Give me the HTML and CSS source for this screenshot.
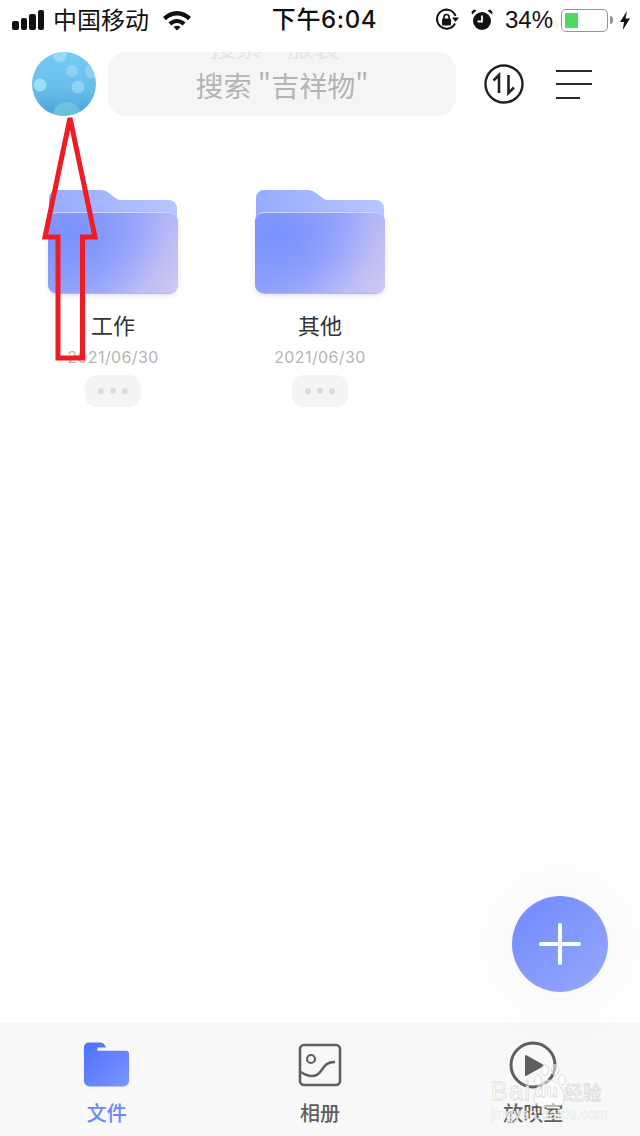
FILE: index.html
```html
<!DOCTYPE html>
<html lang="zh-CN">
  <head>
    <meta charset="UTF-8" />
    <title>文件</title>
    <link rel="stylesheet" href="styles.css">
  </head>
  <body>
    <div class="page">
      <div class="status_bar">
        <div class="status_left">
          <div class="signal"><i></i><i></i><i></i><i></i></div>
          <span class="carrier">中国移动</span>
          <svg class="wifi" width="28" height="22" viewBox="0 0 28 22">
            <path d="M0 8C8 0 20 0 28 8L25 11.200C18.500 5 9.500 5 3 11.200Z" />
            <path d="M5.500 13.500C10.500 8.800 17.500 8.800 22.500 13.500L19.600 16.500C16 13.200 12 13.200 8.400 16.500Z" />
            <path d="M10.500 18C12.500 16.200 15.500 16.200 17.500 18L14 21.500Z" />
          </svg>
        </div>
        <span class="time">下午6:04</span>
        <div class="status_right">
          <svg class="lock_rotate" width="24" height="24" viewBox="0 0 24 24">
            <path d="M20 15.500A9.500 9.500 0 1 1 20.500 8" fill="none" stroke="#111" stroke-width="2" />
            <path d="M17 9.500h7l-3.500 4.500Z" fill="#111" />
            <rect x="7" y="10.500" width="9" height="7" rx="1" fill="#111" />
            <path d="M9 11V9a2.500 2.500 0 0 1 5 0v2" fill="none" stroke="#111" stroke-width="1.600" />
          </svg>
          <svg class="alarm" width="22" height="24" viewBox="0 0 22 24">
            <circle cx="11" cy="13" r="9" fill="#111" />
            <path d="M11 7.500V13.500H6.500" fill="none" stroke="#fff" stroke-width="1.800" />
            <path d="M1 6.500L5.500 2.500L3 1.500L0.500 3.800ZM21 6.500L16.500 2.500L19 1.500L21.500 3.800Z" fill="#111" />
          </svg>
          <span class="battery_text">34%</span>
          <div class="battery">
            <div class="battery_fill"></div>
          </div>
          <div class="battery_tip"></div>
          <svg class="bolt" width="10" height="19" viewBox="0 0 10 19">
            <path d="M7 0L0 11H4L2.800 19L10 7.500H5.500Z" fill="#111" />
          </svg>
        </div>
      </div>

      <div class="top_bar">
        <svg class="avatar" width="64" height="64" viewBox="0 0 64 64">
          <defs>
            <linearGradient id="avatar_bg" x1="0" y1="0" x2="0" y2="1">
              <stop offset="0" stop-color="#76cbf4" />
              <stop offset="0.6" stop-color="#68bde9" />
              <stop offset="1" stop-color="#4aa3d6" />
            </linearGradient>
            <clipPath id="avatar_clip"><circle cx="32" cy="32" r="32" /></clipPath>
          </defs>
          <g clip-path="url(#avatar_clip)">
            <rect width="64" height="64" fill="url(#avatar_bg)" />
            <circle cx="28" cy="3" r="7" fill="#a3dff6" opacity="0.7" />
            <circle cx="40" cy="19" r="6" fill="#a3dff6" opacity="0.55" />
            <circle cx="60" cy="19" r="7" fill="#a3dff6" opacity="0.55" />
            <circle cx="8" cy="33" r="6.500" fill="#a3e4f8" opacity="0.85" />
            <circle cx="46" cy="35" r="6.500" fill="#a3dff6" opacity="0.6" />
            <circle cx="35" cy="64" r="14" fill="#7fcbe2" opacity="0.65" />
          </g>
        </svg>

        <div class="search_box">
          <span class="search_ghost">搜索 服装</span>
          <span class="search_text">搜索 "吉祥物"</span>
        </div>

        <svg class="sort_icon" width="40" height="40" viewBox="0 0 40 40">
          <circle cx="20" cy="20" r="18.500" fill="none" stroke="#222" stroke-width="2.400" />
          <path d="M9.500 16.500L15 11V29" fill="none" stroke="#222" stroke-width="2.600" />
          <path d="M30 23.500L24.500 29V11" fill="none" stroke="#222" stroke-width="2.600" />
        </svg>

        <div class="menu_icon"><i></i><i></i><i class="short"></i></div>
      </div>

      <div class="file_list">
        <div class="folder_item">
          <div class="folder"><div class="folder_back"></div><div class="folder_front"></div></div>
          <div class="folder_name">工作</div>
          <div class="folder_date">2021/06/30</div>
          <div class="more_btn"><i></i><i></i><i></i></div>
        </div>
        <div class="folder_item">
          <div class="folder"><div class="folder_back"></div><div class="folder_front"></div></div>
          <div class="folder_name">其他</div>
          <div class="folder_date">2021/06/30</div>
          <div class="more_btn"><i></i><i></i><i></i></div>
        </div>
      </div>

      <div class="tab_bar">
        <div class="tab active">
          <svg width="50" height="46" viewBox="0 0 50 46">
            <defs>
              <linearGradient id="tab_folder" x1="0" y1="0" x2="1" y2="1">
                <stop offset="0" stop-color="#4e70ff" />
                <stop offset="1" stop-color="#7d95ff" />
              </linearGradient>
            </defs>
            <path d="M1 6a5 5 0 0 1 5-5h12a6 6 0 0 1 5 3l1 2h-9v3.500h30a3 3 0 0 1 3 3V40a6 6 0 0 1-6 6H7a6 6 0 0 1-6-6Z" fill="url(#tab_folder)" transform="translate(1 -0.500) scale(0.96 0.98)" />
          </svg>
          <span>文件</span>
        </div>
        <div class="tab">
          <svg width="46" height="46" viewBox="0 0 46 46">
            <rect x="3" y="3" width="40" height="40" rx="4" fill="none" stroke="#5f5f5f" stroke-width="2.600" />
            <circle cx="14" cy="17" r="4" fill="none" stroke="#5f5f5f" stroke-width="2.200" />
            <path d="M4 30C11 35 19 36 24 29C28 23 30 20 38 20" fill="none" stroke="#5f5f5f" stroke-width="2.400" />
          </svg>
          <span>相册</span>
        </div>
        <div class="tab">
          <svg width="48" height="48" viewBox="0 0 48 48">
            <circle cx="24" cy="24" r="22" fill="none" stroke="#5f5f5f" stroke-width="3" />
            <path d="M17 15L34 24.500L17 34Z" fill="#5f5f5f" stroke="#5f5f5f" stroke-width="2" stroke-linejoin="round" />
          </svg>
          <span>放映室</span>
        </div>
      </div>
    </div>

    <div class="add_btn">
      <svg width="44" height="44" viewBox="0 0 44 44">
        <path d="M22 3V41M3 22H41" stroke="#fff" stroke-width="4" stroke-linecap="round" />
      </svg>
    </div>

    <svg class="red_arrow" width="640" height="400" viewBox="0 0 640 400">
      <path d="M70 118L95 237H82.500V358H58V237H45Z" fill="none" stroke="#ee1c25" stroke-width="5" />
    </svg>

    <div class="watermark">
      <svg class="wm_paw" width="36" height="52" viewBox="0 0 36 52">
        <ellipse cx="7" cy="20" rx="3.500" ry="5" />
        <ellipse cx="14" cy="10" rx="3.500" ry="5.500" />
        <ellipse cx="24" cy="10" rx="3.500" ry="5.500" />
        <ellipse cx="31" cy="20" rx="3.500" ry="5" />
        <path d="M18 20C26 20 33 30 33 39C33 46 27 47 18 47C9 47 3 46 3 39C3 30 10 20 18 20Z" />
      </svg>
      <div class="wm_logo">
        <span class="wm_bai">Bai</span>
        <span class="wm_du">du</span>
        <span class="wm_cn">经验</span>
      </div>
      <span class="wm_url">jingyan.baidu.com</span>
    </div>
  </body>
</html>
```

FILE: styles.css
```css
* {
  margin: 0;
  padding: 0;
  box-sizing: border-box;
}

body {
  width: 640px;
  height: 1136px;
  overflow: hidden;
  position: relative;
  background-color: #fff;
  font-family: "Noto Sans CJK SC", "Liberation Sans", sans-serif;
}

.page {
  height: 1136px;
  display: flex;
  flex-direction: column;
}

/* status bar */
.status_bar {
  height: 40px;
  padding: 0 10px 0 12px;
  display: flex;
  justify-content: space-between;
  align-items: center;
  position: relative;
  z-index: 1;
  background-color: #fff;
  color: #111;
}

.status_left,
.status_right {
  display: flex;
  align-items: center;
}

.signal {
  display: flex;
  align-items: flex-end;
  gap: 2px;
  height: 20px;
  width: 33px;

  i {
    width: 6.500px;
    border-radius: 2px;
    background-color: #111;
  }

  i:nth-child(1) { height: 9px; }
  i:nth-child(2) { height: 12px; }
  i:nth-child(3) { height: 16px; }
  i:nth-child(4) { height: 20px; }
}

.carrier {
  margin: -2px 0 0 8px;
  font-size: 24px;
  line-height: 40px;
}

.wifi {
  margin-left: 14px;
  fill: #111;
}

.time {
  margin-left: 23px;
  font-family: Inter, "Noto Sans CJK SC", sans-serif;
  font-size: 24px;
  line-height: 40px;
  font-weight: 500;
  letter-spacing: 0.6px;
}

.status_right {
  font-family: "Liberation Sans", sans-serif;
}

.alarm {
  margin-left: 12px;
}

.battery_text {
  margin-left: 12px;
  font-size: 24px;
}

.battery {
  width: 47px;
  height: 23px;
  margin-left: 8px;
  padding: 3px;
  border: 1.500px solid #949494;
  border-radius: 5px;
}

.battery_fill {
  width: 13px;
  height: 100%;
  background-color: #4cd964;
}

.battery_tip {
  width: 3px;
  height: 8px;
  margin-left: 2px;
  background-color: #949494;
  border-radius: 0 3px 3px 0;
}

.bolt {
  margin-left: 7px;
}

/* search row */
.top_bar {
  margin-top: 12px;
  padding: 0 48px 0 32px;
  height: 64px;
  display: flex;
  align-items: center;
}

.avatar {
  flex-shrink: 0;
}

.search_box {
  width: 348px;
  height: 64px;
  margin-left: 12px;
  position: relative;
  overflow: hidden;
  display: flex;
  justify-content: center;
  align-items: center;
  background-color: #f5f5f5;
  border-radius: 18px;
}

.search_text {
  margin-top: 2px;
  font-size: 28px;
  color: #b4b4b4;
}

.search_ghost {
  position: absolute;
  top: -24px;
  left: 102px;
  font-size: 26px;
  line-height: 36px;
  word-spacing: 20px;
  white-space: nowrap;
  color: #e6e6e6;
}

.sort_icon {
  margin-left: 28px;
}

.menu_icon {
  width: 36px;
  margin-left: 32px;
  display: flex;
  flex-direction: column;
  gap: 11.500px;

  i {
    height: 2px;
    background-color: #2a2a2a;
  }

  .short {
    width: 24px;
  }
}

/* folders */
.file_list {
  flex: 1;
  padding: 74px 0 0 48px;
  display: flex;
  align-items: flex-start;
  gap: 77px;
}

.folder_item {
  width: 130px;
  display: flex;
  flex-direction: column;
  align-items: center;
}

.folder {
  width: 130px;
  height: 104px;
  position: relative;
}

.folder_back {
  height: 60px;
  margin: 0 1px;
  background: linear-gradient(100deg, #97abff 0%, #b9c8ff 100%);
  clip-path: path("M0 8a8 8 0 0 1 8-8h44a12 12 0 0 1 8 3l8 6a6 6 0 0 0 4 1h48a8 8 0 0 1 8 8v42H0Z");
}

.folder_front {
  position: absolute;
  left: 0;
  right: 0;
  bottom: 0;
  height: 82px;
  border-top: 1.500px solid #cdd7ff;
  border-bottom: 1.500px solid #b5b5ee;
  border-radius: 9px;
  background: radial-gradient(95px 80px at 18% 28%, #7a92ff 0%, rgba(122, 146, 255, 0) 100%), linear-gradient(125deg, #8a9dfb 0%, #a4aef8 50%, #cfc9f2 100%);
  box-shadow: 0 2px 5px rgba(120, 120, 230, 0.2);
}

.folder_name {
  margin-top: 13px;
  font-size: 22px;
  line-height: 34px;
  color: #333;
}

.folder_date {
  margin-top: 4px;
  font-family: Inter, "Liberation Sans", sans-serif;
  font-size: 16px;
  line-height: 24px;
  letter-spacing: 0.4px;
  color: #b5b5b5;
}

.more_btn {
  width: 56px;
  height: 32px;
  margin-top: 6px;
  display: flex;
  justify-content: center;
  align-items: center;
  gap: 6px;
  border-radius: 12px;
  background-color: #f4f4f4;

  i {
    width: 6px;
    height: 6px;
    border-radius: 50%;
    background-color: #dcdcdc;
  }
}

/* bottom tabs */
.tab_bar {
  height: 113px;
  display: grid;
  grid-template-columns: repeat(3, 1fr);
  background-color: #f8f8f8;
}

.tab {
  padding-top: 18px;
  display: flex;
  flex-direction: column;
  align-items: center;
  color: #5f5f5f;
  font-size: 20px;
  font-weight: 500;

  svg {
    height: 48px;
    flex-shrink: 0;
  }

  span {
    margin-top: 7px;
    line-height: 34px;
  }
}

.tab.active {
  color: #6b85ff;
}

/* things on top of the page */
.add_btn {
  width: 96px;
  height: 96px;
  position: absolute;
  left: 512px;
  top: 896px;
  display: flex;
  justify-content: center;
  align-items: center;
  border-radius: 50%;
  background: linear-gradient(140deg, #6f89ff 0%, #96a9fa 100%);
  box-shadow: 0 0 80px rgba(120, 120, 140, 0.1);
}

.red_arrow {
  position: absolute;
  left: 0;
  top: 0;
  pointer-events: none;
}

.watermark {
  position: absolute;
  left: 491px;
  top: 1078px;
  width: 118px;
  display: flex;
  flex-direction: column;
}

.wm_paw {
  position: absolute;
  left: 40px;
  top: -18px;
  fill: rgba(255, 255, 255, 0.5);
  stroke: rgba(215, 215, 215, 0.8);
  stroke-width: 1;
}

.wm_logo {
  position: relative;
  height: 26px;
  display: flex;
  align-items: center;
  font-family: "Liberation Sans", "Noto Sans CJK SC", sans-serif;
  color: rgba(255, 255, 255, 0.9);
  -webkit-text-stroke: 0.8px #dedede;
  white-space: nowrap;
}

.wm_bai {
  font-size: 25px;
  letter-spacing: 1.500px;
}

.wm_du {
  margin-left: 3px;
  font-size: 19px;
  font-weight: 700;
}

.wm_cn {
  margin-left: 6px;
  font-size: 19px;
}

.wm_url {
  margin-top: 1px;
  font-family: "Liberation Sans", sans-serif;
  font-size: 14.500px;
  line-height: 18px;
  white-space: nowrap;
  color: rgba(255, 255, 255, 0.85);
  -webkit-text-stroke: 0.4px #e2e2e2;
}
```
